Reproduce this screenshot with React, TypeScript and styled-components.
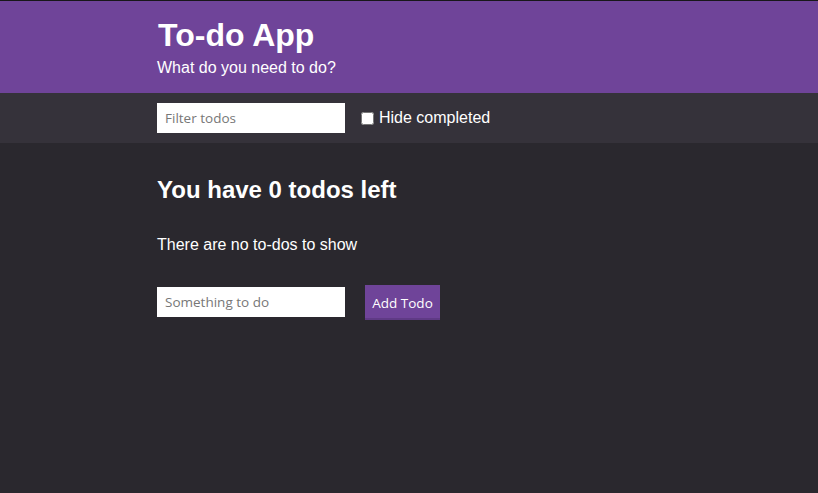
import React, { useState } from "react";
import styled, { createGlobalStyle } from "styled-components";

const GlobalStyle = createGlobalStyle`
  html, body {
    margin: 0;
    padding: 0;
    background: #2a282e;
    min-height: 100%;
  }
  body {
    font-family: "Liberation Sans", Arial, sans-serif;
    color: #ffffff;
    border-top: 1px solid #18171a;
  }
  * { box-sizing: border-box; }
`;

const Page = styled.div`
  min-height: 492px;
  background: #2a282e;
`;

const Container = styled.div`
  width: 504px;
  margin: 0 auto;
`;

const Header = styled.header`
  background: #6f4499;
  height: 92px;
  padding-top: 16px;
`;

const Title = styled.h1`
  margin: 0;
  font-size: 32px;
  font-weight: bold;
  line-height: 37px;
  padding-left: 1px;
`;

const Subtitle = styled.p`
  margin: 5px 0 0;
  font-size: 16px;
  line-height: 18px;
`;

const Toolbar = styled.div`
  background: #35323a;
  height: 50px;
`;

const ToolbarRow = styled(Container)`
  display: flex;
  align-items: center;
  height: 50px;
`;

const TextInput = styled.input`
  width: 188px;
  height: 30px;
  border: none;
  outline: none;
  padding: 0 8px;
  background: #ffffff;
  font-family: "Open Sans", "Noto Sans", sans-serif;
  font-size: 13.5px;
  color: #222;
  &::placeholder {
    color: #777;
  }
`;

const AddInput = styled(TextInput)`
  margin-top: 2px;
`;

const CheckLabel = styled.label`
  display: flex;
  align-items: center;
  margin-left: 12px;
  font-size: 16px;
  color: #ffffff;
  cursor: pointer;
`;

const Check = styled.input`
  width: 13px;
  height: 13px;
  margin: 0 5px 0 4px;
`;

const Main = styled(Container)`
  padding-top: 33px;
`;

const Heading = styled.h2`
  margin: 0 0 32px;
  font-size: 24px;
  font-weight: bold;
  line-height: 28px;
`;

const Empty = styled.p`
  margin: 0 0 31px;
  font-size: 16px;
  line-height: 18px;
`;

const AddRow = styled.form`
  display: flex;
  align-items: flex-start;
  gap: 20px;
  margin: 0;
`;

const AddButton = styled.button`
  width: 75px;
  height: 35px;
  border: none;
  border-bottom: 2px solid #5f3a85;
  background: #6f4499;
  color: #ffffff;
  font-family: "Open Sans", "Noto Sans", sans-serif;
  font-size: 13.5px;
  padding: 2px 0 0;
  cursor: pointer;
`;

export default function App() {
  const [filter, setFilter] = useState("");
  const [hide, setHide] = useState(false);
  const [text, setText] = useState("");
  return (
    <Page>
      <GlobalStyle />
      <Header>
        <Container>
          <Title>To-do App</Title>
          <Subtitle>What do you need to do?</Subtitle>
        </Container>
      </Header>
      <Toolbar>
        <ToolbarRow>
          <TextInput
            placeholder="Filter todos"
            value={filter}
            onChange={(e) => setFilter(e.target.value)}
          />
          <CheckLabel>
            <Check type="checkbox" checked={hide} onChange={(e) => setHide(e.target.checked)} />
            Hide completed
          </CheckLabel>
        </ToolbarRow>
      </Toolbar>
      <Main>
        <Heading>You have 0 todos left</Heading>
        <Empty>There are no to-dos to show</Empty>
        <AddRow onSubmit={(e) => e.preventDefault()}>
          <AddInput
            placeholder="Something to do"
            value={text}
            onChange={(e) => setText(e.target.value)}
          />
          <AddButton type="submit">Add Todo</AddButton>
        </AddRow>
      </Main>
    </Page>
  );
}
